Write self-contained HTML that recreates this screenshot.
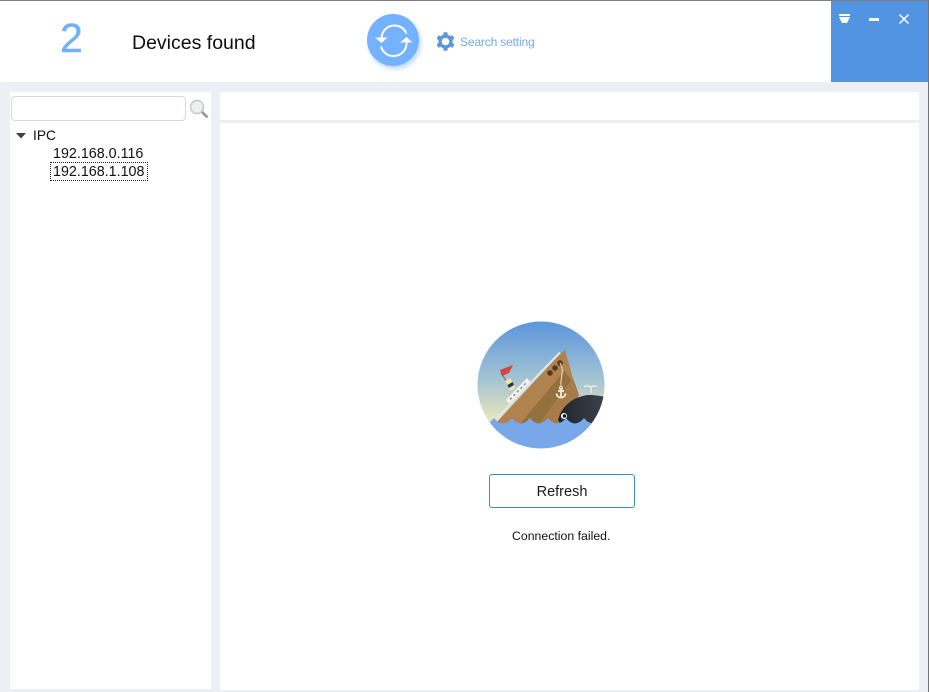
<!DOCTYPE html>
<html>
<head>
<meta charset="utf-8">
<style>
html,body{margin:0;padding:0;}
body{width:929px;height:692px;position:relative;overflow:hidden;background:#eeeff5;font-family:"Liberation Sans",sans-serif;}
.a{position:absolute;}
.t{position:absolute;white-space:nowrap;line-height:1;}
</style>
</head>
<body>
<div class="a" style="left:0;top:1px;width:929px;height:81px;background:#fff;"></div>
<div class="a" style="left:0;top:0;width:929px;height:1px;background:#7f7f7f;"></div>
<div class="a" style="left:928px;top:0;width:1px;height:692px;background:#6f7378;z-index:5;"></div>
<div class="a" style="left:831px;top:1px;width:97px;height:81px;background:#5294e2;"></div>

<div class="t" style="left:60px;top:18px;font-size:41px;color:#73b0fb;-webkit-text-stroke:.4px #73b0fb;">2</div>
<div class="t" style="left:132px;top:34px;font-size:19.500px;color:#0d0d0d;">Devices found</div>

<div class="a" style="left:367px;top:14px;width:52px;height:52px;border-radius:50%;background:#74b1ff;box-shadow:2px 3px 5px rgba(116,170,240,.45);"></div>
<svg class="a" style="left:367px;top:14px;" width="52" height="52" viewBox="0 0 52 52" fill="none">
<path d="M14.500 25A13 13 0 0 1 39.500 19.500" stroke="#fff" stroke-width="2"/>
<path d="M39.500 28A13 13 0 0 1 14 32.500" stroke="#fff" stroke-width="2"/>
<path d="M8 23.500H20.500L14.500 29Z" fill="#fff"/>
<path d="M33 28.500H45.500L39.500 23Z" fill="#fff"/>
</svg>

<svg class="a" style="left:436px;top:32px;" width="19" height="19" viewBox="0 0 20 20">
<g fill="#5a97dc">
<circle cx="10" cy="10" r="7.500"/>
<rect x="7.800" y="0.300" width="4.400" height="19.400" rx="0.800"/>
<rect x="7.800" y="0.300" width="4.400" height="19.400" rx="0.800" transform="rotate(60 10 10)"/>
<rect x="7.800" y="0.300" width="4.400" height="19.400" rx="0.800" transform="rotate(120 10 10)"/>
</g>
<circle cx="10" cy="10" r="4" fill="#fff"/>
</svg>
<div class="t" style="left:460px;top:36px;font-size:12.100px;color:#79a9e4;letter-spacing:-.2px;">Search setting</div>

<svg class="a" style="left:838px;top:13px;" width="13" height="11" viewBox="0 0 13 11">
<rect x="1" y="1" width="11" height="2" fill="#fff"/>
<path d="M1 4H12L9 10H4Z" fill="#fff"/>
</svg>
<div class="a" style="left:869px;top:18px;width:10px;height:3px;background:#fff;"></div>
<svg class="a" style="left:898px;top:13px;" width="12" height="12" viewBox="0 0 12 12">
<path d="M1.500 1.500L10.500 10.500M10.500 1.500L1.500 10.500" stroke="#fff" stroke-width="1.500" fill="none"/>
</svg>

<div class="a" style="left:10px;top:92px;width:201px;height:597px;background:#fff;"></div>
<div class="a" style="left:220px;top:92px;width:699px;height:28px;background:#fff;"></div>
<div class="a" style="left:220px;top:123px;width:699px;height:567px;background:#fff;"></div>

<div class="a" style="left:11px;top:96px;width:173px;height:23px;border:1px solid #d9d9d9;border-radius:4px;background:#fff;"></div>
<svg class="a" style="left:189px;top:99px;" width="20" height="20" viewBox="0 0 20 20" fill="none">
<circle cx="8" cy="8" r="6.500" fill="#e9f1f3" stroke="#c2c9c9" stroke-width="1.500"/>
<path d="M13 13L18.500 18.500" stroke="#9a9c9c" stroke-width="2.800"/>
</svg>

<svg class="a" style="left:16px;top:133px;" width="10" height="6" viewBox="0 0 10 6"><path d="M0 0H10L5 5.500Z" fill="#404040"/></svg>
<div class="t" style="left:33px;top:129px;font-size:13.800px;color:#111;">IPC</div>
<div class="t" style="left:53px;top:147px;font-size:14.300px;color:#111;">192.168.0.116</div>
<div class="a" style="left:50px;top:162px;width:96px;height:17px;border:1px dotted #222;"></div>
<div class="t" style="left:53px;top:165px;font-size:14.300px;color:#111;">192.168.1.108</div>

<svg class="a" style="left:477px;top:321px;" width="128" height="128" viewBox="0 0 128 128">
<defs>
<linearGradient id="sky" x1="0" y1="0" x2="0" y2="1">
<stop offset="0" stop-color="#5b95dc"/>
<stop offset=".45" stop-color="#a3c3d3"/>
<stop offset=".78" stop-color="#e9e6bd"/>
</linearGradient>
<linearGradient id="wh" x1="0" y1="0" x2="1" y2="0">
<stop offset="0" stop-color="#20242c"/>
<stop offset="1" stop-color="#3c414c"/>
</linearGradient>
<clipPath id="c"><circle cx="64" cy="64" r="63.500"/></clipPath>
</defs>
<g clip-path="url(#c)">
<rect width="128" height="128" fill="url(#sky)"/>
<!-- flag -->
<path d="M23 49L36 44L32 52L25 55Z" fill="#d9413f"/>
<path d="M24 52L30 61" stroke="#8a5a4a" stroke-width="1"/>
<!-- funnel -->
<path d="M28 60L33 57L35.500 61L30.500 64Z" fill="#f0e3a9"/>
<path d="M30.500 64L35.500 61L37 64L32 67Z" fill="#223450"/>
<path d="M32 67L37 64L38.500 67L33.500 70Z" fill="#f0e3a9"/>
<!-- deck -->
<path d="M29 79L50 57L54 62L33 83Z" fill="#f4f4f4"/>
<path d="M33 78.500L49 62" stroke="#8c8c8c" stroke-width="1.500" stroke-dasharray="2.500 2.500"/>
<!-- hull -->
<path d="M18 103L83 33L88 29L95 54L102 74L84 103Z" fill="#b0824e"/>
<path d="M43 103L87 50L98 63L102 74L84 103Z" fill="#94703f"/>
<path d="M62 103L95 58L102 74L84 103Z" fill="#a87c49"/>
<path d="M17 100L83 31.500" stroke="#e4e4e4" stroke-width="2.200"/>
<circle cx="73" cy="52" r="2.800" fill="#543a20"/>
<circle cx="78" cy="47" r="2.800" fill="#543a20"/>
<circle cx="83" cy="42" r="2.800" fill="#543a20"/>
<path d="M83 42C88 50 83 56 84 65" stroke="#efe5cf" stroke-width="1" fill="none"/>
<path d="M84 67V77M81 70H87M79.500 72.500C80 78 88 78 88.500 72.500" stroke="#f5ecd6" stroke-width="1.800" fill="none"/>
<circle cx="84" cy="67" r="1.500" fill="none" stroke="#f5ecd6"/>
<!-- whale -->
<path d="M81 99C84 86 96 75 112 74C118 74 124 75 128 76V104H84Z" fill="url(#wh)"/>
<circle cx="87" cy="95" r="3" fill="#fff"/>
<circle cx="87.500" cy="95" r="1.700" fill="#111"/>
<path d="M107 66C110 64 113 64.500 114 67M114 67C115 64.500 118 64 120 66M114 67V72" stroke="#f4f4f0" stroke-width="1.200" fill="none"/>
<!-- water -->
<path d="M-1 97Q8 108 17 97Q26 108 35 97Q44 108 53 97Q62 108 71 97Q80 108 89 97Q98 108 107 97Q116 108 125 97Q130 104 134 97V128H-1Z" fill="#78a7ea"/>
</g>
</svg>

<div class="a" style="left:489px;top:474px;width:144px;height:32px;border:1px solid #3a8fc4;border-radius:3px;background:#fff;"></div>
<div class="t" style="left:489px;top:485px;width:146px;text-align:center;font-size:14.500px;color:#1a1a1a;">Refresh</div>
<div class="t" style="left:512px;top:530px;font-size:12.300px;color:#111;">Connection failed.</div>
</body>
</html>
